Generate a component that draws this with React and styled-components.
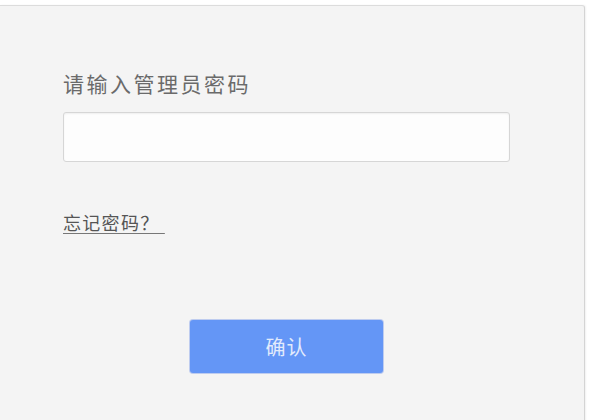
import styled, { createGlobalStyle } from 'styled-components';

const GlobalStyle = createGlobalStyle`
    html, body {
        margin: 0;
        padding: 0;
        background: #ffffff;
        overflow: hidden;
    }
    body {
        font-family: "Noto Sans CJK SC", "Liberation Sans", sans-serif;
    }
`;

const Page = styled.div`
    width: 598px;
    height: 420px;
    padding-top: 5px;
    box-sizing: border-box;
`;

const Panel = styled.div`
    width: 585px;
    height: 430px;
    box-sizing: border-box;
    background: #f4f4f4;
    border-top: 1px solid #dcdcdc;
    border-right: 1px solid #d4d4d4;
    border-top-right-radius: 3px;
    box-shadow: 1px 0 2px rgba(0,0,0,0.06);
    padding-left: 63px;
    display: flex;
    flex-direction: column;
    align-items: flex-start;
`;

const Label = styled.div`
    margin-top: 65px;
    font-size: 21px;
    line-height: 24px;
    letter-spacing: 2.5px;
    color: #6a6a6a;
`;

const Input = styled.input`
    margin-top: 17px;
    width: 447px;
    height: 50px;
    box-sizing: border-box;
    background: #fdfdfd;
    border: 1px solid #d6d6d6;
    border-radius: 3px;
    box-shadow: inset 0 1px 2px rgba(0,0,0,0.06);
    outline: none;
    padding: 0 10px;
    font-size: 16px;
`;

const Forgot = styled.a`
    margin-top: 50px;
    font-size: 18px;
    line-height: 20px;
    letter-spacing: 1.3px;
    color: #555555;
    text-decoration: underline;
    text-decoration-color: #777777;
    text-underline-offset: 3px;
    white-space: pre;
    cursor: pointer;
`;

const Button = styled.button`
    margin-top: 88px;
    margin-left: 127px;
    width: 193px;
    height: 53px;
    border: none;
    border-radius: 3px;
    background: #6496f6;
    color: #e2ebfc;
    font-family: inherit;
    font-size: 20px;
    letter-spacing: 1px;
    box-shadow: 0 0 0 1px rgba(90,130,230,0.35);
    cursor: pointer;
`;

const App = () => {
    return (
        <Page>
            <GlobalStyle />
            <Panel>
                <Label>请输入管理员密码</Label>
                <Input type="password" />
                <Forgot>忘记密码？ </Forgot>
                <Button>确认</Button>
            </Panel>
        </Page>
    );
};

export default App;
